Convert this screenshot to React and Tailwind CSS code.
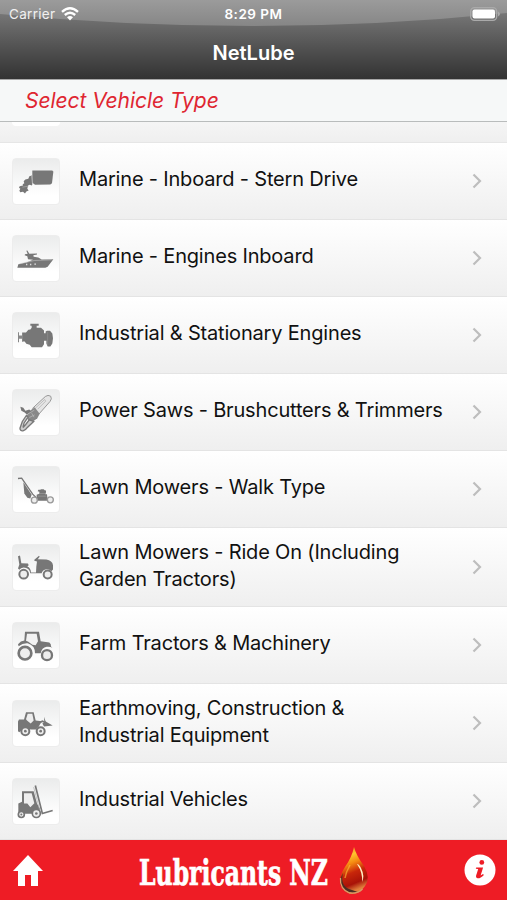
const SternDriveIcon = () => (
  <svg viewBox="36 111 144 138" className="-m-px h-[47px] w-12" fill="#777">
    <path d="M97 147h60l3 4-4 34-5 4-46 1-8-6z" />
    <path d="M88 164l8-2v30l-7-2-5 2-2 10 4 5-7 3-4 6-6-5-8 1-3-4 3-6-4-3 2-5 10-2-1-4 5-3-2-6 5-5 9-2z" />
    <path d="M94 162l4 28" stroke="#bbb" strokeWidth="2" fill="none" />
    <path d="M67 197l18-3" stroke="#aaa" strokeWidth="2" fill="none" />
  </svg>
);

const BoatIcon = () => (
  <svg viewBox="36 344 144 138" className="-m-px h-[47px] w-12" fill="#777">
    <path d="M52 441l3-11 26-6 18-7-15-2-2-9-8-3 1-3 8-1-4-9 3-1 6 10 23-1v3l-11 2 1 5 14 2 10 6 35-1-17 23-7 3z" />
    <path d="M58 429l45-10 52-2" stroke="#d0d0d0" strokeWidth="1.5" fill="none" />
    <path d="M78 431h4M90 431h4M103 430h5" stroke="#ddd" strokeWidth="4" />
  </svg>
);

const EngineIcon = () => (
  <svg viewBox="36 48 144 138" className="-m-px h-[47px] w-12" fill="#777">
    <path d="M91 82h25v6h-6v6h13l9 8v41l-6 9H95l-6-7-10-3-5-7h-5v-27h9l7-8 6-1 4-5v-6h-4z" />
    <path d="M54 107h3v10h9v-9h3v28h-3v-9h-9v10h-3z" fill="#888" />
    <path d="M131 110h6v-5l4-2h9l7 8 2 14-2 16-6 9h-8l-4-9v-8h-8z" />
    <path d="M143 107v39" stroke="#999" strokeWidth="1.5" />
  </svg>
);

const ChainsawIcon = () => (
  <svg viewBox="36 279 144 138" className="-m-px h-[47px] w-12" fill="none" stroke="#777">
    <path d="M97 336l39-36q8-6 16-1 5 8-2 16l-37 42" strokeWidth="3" fill="#e5e5e5" stroke="#999" />
    <path d="M106 335l28-26 3 5-24 24" strokeWidth="2" stroke="#aaa" />
    <path d="M92 341l12-9 15 20-7 13-13 10-14-2-6-14z" fill="#888" stroke="none" />
    <path d="M61 331l9 3 6 9 12-4 5 5-12 11-7-7-10-5z" fill="#777" stroke="none" />
    <path d="M79 357l-12 18-7 20q0 9 9 8 8-2 14-11l18-17-13-5-11 14-8 9 3-13 12-18z" strokeWidth="4" fill="#ccc" />
    <path d="M83 353l20-12M95 350l7 12M88 363l16-8" strokeWidth="2" stroke="#bbb" />
  </svg>
);

const WalkMowerIcon = () => (
  <svg viewBox="36 46 144 138" className="-m-px h-[47px] w-12" fill="none" stroke="#777">
    <path d="M54 82l11-1 33 48 14 14" strokeWidth="4" />
    <path d="M70 93l3 34 9 13 9 2 4-11z" fill="#777" stroke="none" />
    <path d="M110 131l8-3v-6l-5-2 2-4h6l2-2h8l3 3 4 1v5l-2 6h5l2 20h-29l-4-9z" fill="#777" stroke="none" />
    <path d="M114 135h25M117 127h20" stroke="#aaa" strokeWidth="1.5" />
    <circle cx="103" cy="147" r="9" fill="#eee" stroke="#999" strokeWidth="4" />
    <circle cx="151" cy="146" r="9" fill="#eee" stroke="#999" strokeWidth="4" />
  </svg>
);

const RideMowerIcon = () => (
  <svg viewBox="36 280 144 138" className="-m-px h-[47px] w-12" fill="#777">
    <path d="M54 315l6-2 4 23 20 1 2 5-4 4q10 4 11 18h15l1-18 2-15-8-2v-3l14-12 2 3-6 7 26 1q18 3 20 17v13l-5 5q-6-7-15-6-11 1-14 12H91q-3-16-20-17-9 1-13 7l-4-4 4-12z" />
    <circle cx="71" cy="369" r="13" fill="#eee" stroke="#777" strokeWidth="6" />
    <circle cx="143" cy="370" r="12" fill="#eee" stroke="#777" strokeWidth="6" />
  </svg>
);

const TractorIcon = () => (
  <svg viewBox="36 51 144 138" className="-m-px h-[47px] w-12" fill="#777">
    <path d="M75 79h42l5 28 26 4q6 4 5 12l4 4q-6-4-17-3-15 3-18 19h-17q0-24-22-30-15-1-27 9l-2-6q8-10 19-11z" />
    <path d="M81 85h29l4 22-7 12-10-1-12-9-7-3z" fill="#f2f2f2" />
    <circle cx="75" cy="143" r="19" fill="#eee" stroke="#777" strokeWidth="8" />
    <circle cx="141" cy="149" r="15" fill="#eee" stroke="#777" strokeWidth="7" />
  </svg>
);

const LoaderIcon = () => (
  <svg viewBox="36 285 144 138" className="-m-px h-[47px] w-12" fill="#777">
    <path d="M78 320h23l6 25 18 2-9 17-8 8H92l-13-4-12 4-9 8-4-3v-29l3-6h15z" />
    <path d="M83 325h14l4 20-9 9-11-9-3-4z" fill="#eee" />
    <path d="M103 360l24-13 11 5" fill="none" stroke="#777" strokeWidth="5" />
    <path d="M132 334l5 14 21 12-26 3-5-9 6-4z" />
    <circle cx="76" cy="377" r="12" fill="#eee" stroke="#777" strokeWidth="6" />
    <circle cx="122" cy="377" r="12" fill="#eee" stroke="#777" strokeWidth="6" />
    <circle cx="76" cy="377" r="4" />
    <circle cx="122" cy="377" r="4" />
  </svg>
);

const ForkliftIcon = () => (
  <svg viewBox="36 54 144 138" className="-m-px h-[47px] w-12" fill="#777">
    <path d="M55 129l11-5V92h35l10 37 9 16v15H55z" />
    <path d="M72 98h23l8 30-12 12-9-11H72z" fill="#eee" />
    <path d="M106 75l21 84 31-9" fill="none" stroke="#777" strokeWidth="5" />
    <path d="M101 80l20 76" fill="none" stroke="#aaa" strokeWidth="2" />
    <circle cx="64" cy="162" r="9" fill="#eee" stroke="#777" strokeWidth="5" />
    <circle cx="109" cy="159" r="12" fill="#eee" stroke="#777" strokeWidth="5" />
    <circle cx="64" cy="162" r="3" />
    <circle cx="109" cy="159" r="4" />
  </svg>
);

const vehicleTypes = [
  { lines: ["Marine - Inboard - Stern Drive"], Icon: SternDriveIcon },
  { lines: ["Marine - Engines Inboard"], Icon: BoatIcon },
  { lines: ["Industrial & Stationary Engines"], Icon: EngineIcon },
  { lines: ["Power Saws - Brushcutters & Trimmers"], Icon: ChainsawIcon },
  { lines: ["Lawn Mowers - Walk Type"], Icon: WalkMowerIcon },
  { lines: ["Lawn Mowers - Ride On (Including", "Garden Tractors)"], Icon: RideMowerIcon },
  { lines: ["Farm Tractors & Machinery"], Icon: TractorIcon },
  { lines: ["Earthmoving, Construction &", "Industrial Equipment"], Icon: LoaderIcon },
  { lines: ["Industrial Vehicles"], Icon: ForkliftIcon },
];

function Header() {
  return (
    <header className="relative h-20 shrink-0 border-b border-[#a8a8a8] bg-linear-to-b from-[#858585] to-[#333] text-white">
      {/* gloss */}
      <svg className="absolute inset-0 h-[79px] w-full" viewBox="0 0 507 79" preserveAspectRatio="none">
        <defs>
          <linearGradient id="gloss" x1="0" y1="0" x2="0" y2="1">
            <stop offset="0" stopColor="#9b9b9b" />
            <stop offset="1" stopColor="#868686" />
          </linearGradient>
        </defs>
        <path d="M0 0h507v13Q380 26 253 26T0 14z" fill="url(#gloss)" />
      </svg>
      <div className="relative grid h-7 grid-cols-3 items-center text-[13.5px]">
        <div className="flex items-center gap-1.5 pl-[9px]">
          <span className="tracking-[0.3px] text-[#f0f0f0]">Carrier</span>
          <svg width="18" height="14" viewBox="0 0 18 14" fill="none" stroke="white" strokeWidth="2.4">
            <path d="M1 4.8Q9-2.1 17 4.8M3.8 8Q9 3.5 14.2 8" />
            <path d="M6 10.2q3-2.3 6 0L9 13.4z" fill="white" stroke="none" />
          </svg>
        </div>
        <span className="text-center font-semibold tracking-[0.5px]">8:29 PM</span>
        <svg className="mr-[6px] justify-self-end" width="31" height="14" viewBox="0 0 31 14">
          <rect x="0.7" y="0.7" width="26" height="12.6" rx="3.8" fill="none" stroke="#aaa" strokeWidth="1.3" />
          <rect x="2.5" y="2.5" width="22.5" height="9" rx="2" fill="white" />
          <path d="M28 4.5q4 2.5 0 5z" fill="#aaa" />
        </svg>
      </div>
      <h1 className="relative pt-[11px] text-center text-[20px] leading-[28px] font-semibold">NetLube</h1>
    </header>
  );
}

function VehicleRow({ lines, Icon }) {
  return (
    <li
      className={`flex shrink-0 items-center border-b border-[#e4e4e4] bg-linear-to-b from-white to-[#efefef] pl-3 ${
        lines.length > 1 ? "h-[79px]" : "h-[77px]"
      }`}
    >
      <div className="h-[47px] w-12 shrink-0 rounded border border-[#ededed] bg-linear-to-b from-[#ebecec] to-white to-80%">
        <Icon />
      </div>
      <div className="ml-[19px] flex-1 pb-[3px] text-[20px] leading-[27px] tracking-[-0.18px] whitespace-nowrap text-[#111]">
        {lines.map((line) => (
          <p key={line}>{line}</p>
        ))}
      </div>
      <svg className="mr-[25px]" width="10" height="16" viewBox="0 0 10 16" fill="none" stroke="#bdbdbd" strokeWidth="2.2">
        <path d="M1.5 1.5L8 8l-6.5 6.5" />
      </svg>
    </li>
  );
}

function Footer() {
  return (
    <footer className="flex h-[60px] shrink-0 items-center bg-[#ee1c25]">
      <svg className="ml-[13px]" width="30" height="31" viewBox="0 0 30 31" fill="white">
        <path d="M15 0l15 16h-5v15h-7V20h-6v11H5V16H0z" />
      </svg>
      <svg className="ml-[94px] overflow-visible" width="236" height="60" viewBox="0 0 236 60">
        <defs>
          <linearGradient id="drop" x1="0" y1="0" x2="0.25" y2="1">
            <stop offset="0" stopColor="#e8751c" />
            <stop offset="0.25" stopColor="#ffc52e" />
            <stop offset="0.42" stopColor="#f58a12" />
            <stop offset="0.62" stopColor="#c8260a" />
            <stop offset="0.85" stopColor="#a81208" />
            <stop offset="1" stopColor="#e0803c" />
          </linearGradient>
        </defs>
        <text
          x="2"
          y="45"
          textLength="189"
          lengthAdjust="spacingAndGlyphs"
          className="fill-white stroke-white stroke-[0.7px] text-[36px] font-bold"
          fontFamily="'DejaVu Serif Condensed', 'DejaVu Serif', serif"
        >
          Lubricants NZ
        </text>
        <path d="M217 7q2 8 10 19 7 12 1 20-5 8-13 8-9-1-12-10-1-8 5-17 7-10 9-20z" fill="url(#drop)" />
        <path d="M206 33q-3 12 6 16l9 3q-13 3-17-8-1-6 2-11z" fill="#4a2d22" />
        <path d="M203.500 38q-1 11 9 15 8 1 13-4" fill="none" stroke="#d99a68" strokeWidth="1.3" />
        <path d="M220 24q6 9 5 18 3-6-1-14-2-4-4-4z" fill="#fff0c4" />
        <path d="M213 25q-4 7-5 13" fill="none" stroke="#ffc23c" strokeWidth="1.5" opacity="0.6" />
      </svg>
      <svg className="mr-[11px] ml-auto" width="32" height="32" viewBox="0 0 32 32">
        <circle cx="16" cy="16" r="15.5" fill="white" />
        <circle cx="17.8" cy="8.4" r="2.4" fill="#ee1c25" />
        <path d="M12.2 13.4h6.9l-2.5 8.2 2.4-1.6.9.9q-4.2 4.2-6.9 3.2-1.8-1-.3-4.4l1.5-4.6-2.4-.3z" fill="#ee1c25" />
      </svg>
    </footer>
  );
}

export default function App() {
  return (
    <div className="flex h-[900px] w-[507px] flex-col overflow-hidden bg-white font-['Inter',sans-serif]">
      <Header />
      <div className="h-[42px] shrink-0 border-b border-[#b9bcbc] bg-[#f6f8f8] pl-[25px] text-[21px] leading-[41px] tracking-[-0.05px] text-[#df2631] italic">
        Select Vehicle Type
      </div>
      <ul className="flex flex-col">
        {/* end of the row scrolled under the title */}
        <li className="h-[21px] shrink-0 border-b border-[#e6e6e6] bg-linear-to-b from-[#f5f5f5] to-[#efefef] pl-3">
          <div className="h-1 w-12 rounded-b bg-white" />
        </li>
        {vehicleTypes.map((vehicle) => (
          <VehicleRow key={vehicle.lines[0]} {...vehicle} />
        ))}
      </ul>
      <Footer />
    </div>
  );
}
